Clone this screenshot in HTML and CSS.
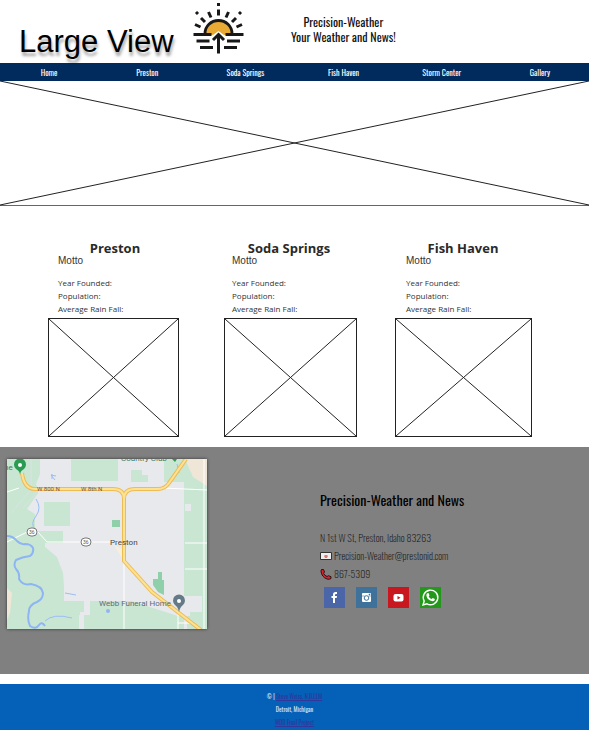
FILE: index.html
```html
<!DOCTYPE html>
<html lang="en">
<head>
<meta charset="utf-8">
<title>Precision-Weather</title>
<link rel="stylesheet" href="styles.css">
</head>
<body>
<header class="masthead">
  <div class="view-label">Large View</div>
  <svg class="logo" viewBox="0 0 52 52" aria-hidden="true">
    <path d="M12 32a13.500 14 0 0 1 27 0h-8l-5.500-4-5.500 4z" fill="#e9aa35"/>
    <path d="M12 31.500v-1a13.500 13 0 0 1 27 0v1" fill="none" stroke="#181818" stroke-width="2.800"/>
    <g fill="none" stroke="#181818" stroke-width="3">
      <path d="M0.500 31.500H18.500M32.500 31.500h18M3.500 38h13M34 38h13M7 44.500h13M31 44.500h13"/>
      <path d="M25.500 50.500V32M20 37l5.500-5.500 5.500 5.500"/>
      <path d="M25.500 0v3M25.500 6.500v6M15.500 9l2.500 5.500M35.500 9L33 14.500M8 15l4 4M43 15l-4 4M2 21.500l5.500 2.500M49 21.500L43.500 24M3 9l2 2M48 9l-2 2"/>
    </g>
  </svg>
  <h1 class="site-title">Precision-Weather<br>Your Weather and News!</h1>
</header>
<nav class="nav">
  <a href="#">Home</a><a href="#">Preston</a><a href="#">Soda Springs</a><a href="#">Fish Haven</a><a href="#">Storm Center</a><a href="#">Gallery</a>
</nav>
<main>
  <svg class="wire hero" viewBox="0 0 100 100" preserveAspectRatio="none" role="img" aria-label="Banner"><path d="M0 0L100 100M100 0L0 100"/></svg>
  <section class="towns">
    <div class="cards">
      <article class="card"><h2>Preston</h2><p class="motto">Motto</p><ul><li>Year Founded:</li><li>Population:</li><li>Average Rain Fall:</li></ul></article>
      <article class="card"><h2>Soda Springs</h2><p class="motto">Motto</p><ul><li>Year Founded:</li><li>Population:</li><li>Average Rain Fall:</li></ul></article>
      <article class="card"><h2>Fish Haven</h2><p class="motto">Motto</p><ul><li>Year Founded:</li><li>Population:</li><li>Average Rain Fall:</li></ul></article>
    </div>
    <div class="photos">
      <svg class="wire photo" viewBox="0 0 100 100" preserveAspectRatio="none" role="img" aria-label="Preston"><path d="M0 0L100 100M100 0L0 100"/></svg>
      <svg class="wire photo" viewBox="0 0 100 100" preserveAspectRatio="none" role="img" aria-label="Soda Springs"><path d="M0 0L100 100M100 0L0 100"/></svg>
      <svg class="wire photo" viewBox="0 0 100 100" preserveAspectRatio="none" role="img" aria-label="Fish Haven"><path d="M0 0L100 100M100 0L0 100"/></svg>
    </div>
  </section>
  <section class="contact">
    <svg class="map" viewBox="0 0 200 170" role="img" aria-label="Map of Preston">
      <rect width="200" height="170" fill="#c9e6d3"/>
      <path d="M33 0H157V23H177V137H195V153H180V170H72V142H57V127L56 114L50 98L38 88V84H56V72H28V55L20 50L31 34V30L29 25L33 15Z" fill="#e8e9ed"/>
      <path d="M64 0h47v22H64zM37 43h26v24H37zM124 11h11v5h6v7h-17z" fill="#c9e6d3"/>
      <path d="M178 45h6v7h-6z" fill="#e8e9ed"/>
      <path d="M57 142h20v11h-6v17H57z" fill="#c9e6d3"/>
      <path d="M83 142h94v28H77v-14h6zM57 142h16v14h-2v14H57z" fill="#c9e6d3"/>
      <path d="M118 140h59v-3h18v16h-12v4h-12z" fill="#e8e9ed"/>
      <path d="M178 0h22v27l-14-9z" fill="#efe6d8"/><path d="M0 129l5 5-2 20-3 7z" fill="#efe6d8"/>
      <path d="M105 61h8v7h-8zM151 113h4v8h2v15l-6-3-5-7v-6h5z" fill="#8fcfaa"/>
      <g fill="none" stroke="#fff" stroke-width="1"><path d="M0 83l20-10h11l9 10h77M117 102v68M0 33l12-4M156 29l44 2M178 84h22M178 110h22M197 0v170M171 152v18M171 164h12"/></g>
      <path d="M28 26L4 54M24 0v26M16 49l14-16" fill="none" stroke="#d9e3df" stroke-width="1"/>
      <path d="M0 77q6 0 10 5q4 4 8 3q6 0 8 4q1 5-3 8q-8 1-14 4q-3 5 0 9q4 4 3 10q4 7 12 5q11 2 12 9q0 6-6 9q-8 3-8 9q-2 9 1 15q6 4 9-1q3-4 6 1" fill="none" stroke="#8eb5f3" stroke-width="2"/>
      <path d="M29 40q6 9 0 17t-1 13M38 162q8-8 27-3M58 134l11 2M44 16l4 5M45 15v5M44 16l5 1M170 5l2 9" fill="none" stroke="#9bbdf5" stroke-width="1"/>
      <circle cx="101" cy="152" r="2" fill="#8eb5f3"/><path d="M107 86l9 5v9l-6-9z" fill="#f6f0d5"/>
      <g fill="none" stroke-linejoin="round"><path d="M15 14q2 16 13 16h78q11 0 11 10v62l28 31 49 38M117 40q0-10 11-10h23q7 0 11-6l17-24" stroke="#eebc55" stroke-width="4"/><path d="M15 14q2 16 13 16h78q11 0 11 10v62l28 31 49 38M117 40q0-10 11-10h23q7 0 11-6l17-24" stroke="#fde293" stroke-width="2"/></g>
      <g fill="#fff" stroke="#777" stroke-width="1"><rect x="20" y="69" width="10" height="8" rx="4"/><rect x="74" y="79" width="10" height="8" rx="4"/></g>
      <g class="map-small"><text x="22" y="75">36</text><text x="76" y="85">36</text></g>
      <g class="map-road"><text x="30" y="32">W 800 N</text><text x="74" y="32">W 8th N</text></g>
      <g class="map-place"><text class="map-town" x="103" y="86">Preston</text><text x="92" y="147">Webb Funeral Home</text><text class="map-green" x="114" y="2">Country Club</text><text class="map-green" x="-3" y="11">ne</text></g>
      <path d="M13 16q0-4-4-6a6 6 0 1 1 8 0q-4 2-4 6z" fill="#2a9b50"/><circle cx="13" cy="6" r="2" fill="#fff"/>
      <path d="M165 0h5l-2 3z" fill="#2a9b50"/>
      <path d="M172 153q-1-5-4-7a6 6 0 1 1 8 0q-3 2-4 7z" fill="#647b87"/><circle cx="172" cy="142" r="2" fill="#fff"/>
    </svg>
    <address class="details">
      <h2>Precision-Weather and News</h2>
      <p>N 1st W St, Preston, Idaho 83263</p>
      <p><svg class="glyph" viewBox="0 0 12 12" aria-hidden="true"><path d="M.5 2.500h11v7H.5z" fill="#eee" stroke="#333"/><path d="M5 5h2l1 1-1 2H5L4 6z" fill="#d77"/></svg><a href="mailto:Precision-Weather@prestonid.com">Precision-Weather@prestonid.com</a></p>
      <p><svg class="glyph" viewBox="0 0 12 12" aria-hidden="true"><path d="M1.500 1.500h2l1 2.500-1 1.200q1 2.500 3.500 3.300l1.500-.8 2.500 1v1.800q-1.500 1.200-4 .5Q1.500 9 1 3z" fill="#d9242e" stroke="#2b1113"/></svg>867-5309</p>
      <div class="social">
        <a class="fb" href="#" aria-label="Facebook"><svg viewBox="0 0 21 21"><path d="M9 16v-5H7.500V9H9V7.500Q9 5 11.500 5H13v2h-1q-1 0-1 1v1h2l-.3 2H11v5z" fill="#fff"/></svg></a>
        <a class="ig" href="#" aria-label="Instagram"><svg viewBox="0 0 21 21"><rect x="6" y="6" width="9" height="9" rx="1" fill="#fff"/><circle cx="10.500" cy="11" r="2.300" fill="none" stroke="#3f729b"/><path d="M6 9h2.500M12.500 9H15M13 7h1v1h-1z" stroke="#3f729b" fill="#3f729b" stroke-width=".6"/></svg></a>
        <a class="yt" href="#" aria-label="YouTube"><svg viewBox="0 0 21 21"><rect x="5.500" y="7" width="10" height="7.500" rx="2" fill="#fff"/><path d="M9.500 9v3.500l3-1.750z" fill="#c8171e"/></svg></a>
        <a class="wa" href="#" aria-label="WhatsApp"><svg viewBox="0 0 21 21"><path d="M3 18l1.200-4A7.300 7.300 0 1 1 7 16.800z" fill="none" stroke="#fff" stroke-width="1.400"/><path d="M7.300 6.200l1.200-.2 1 2.300-.8 1.100q1 2 3 2.700l1-1.200 2.200 1q0 2.100-2.300 2.300-5.500-1-6.300-6 .2-1.400 1-2z" fill="#fff"/></svg></a>
      </div>
    </address>
  </section>
</main>
<footer class="footer">
  <p>© | <a href="#">Steve Weiss, N.D.I.LM</a></p>
  <p>Detroit, Michigan</p>
  <p><a href="#">WDD Final Project</a></p>
</footer>
</body>
</html>
```
FILE: styles.css
```css
* { box-sizing: border-box; }
body, h1, h2, p, ul { margin: 0; padding: 0; }
body {
  background: #fff;
  color: #111;
  font-family: "Oswald", "Roboto Condensed", "Liberation Sans Narrow", "Liberation Sans", sans-serif;
}
a { color: inherit; text-decoration: none; }
svg { display: block; }

.masthead { display: flex; align-items: flex-start; padding: 3px 0 4px 19px; }
.view-label {
  width: 174px;
  padding-top: 22px;
  font: 31px/34px "Liberation Sans", Arial, sans-serif;
  color: #000;
  text-shadow: 1px 4px 3px rgba(0, 0, 0, .35);
}
.logo { width: 52px; height: 52px; }
.site-title {
  margin-left: 46px;
  padding-top: 11px;
  font-size: 12px;
  line-height: 15px;
  font-weight: 400;
  text-align: center;
}

.nav { display: grid; grid-template-columns: repeat(6, 1fr); background: #002b5c; }
.nav a { color: #fff; font-size: 8px; line-height: 18px; font-weight: 400; text-align: center; }

.wire { overflow: visible; fill: none; stroke: #222; }
.wire path { vector-effect: non-scaling-stroke; }
.hero { width: 100%; height: 125px; border-bottom: 1px solid #666; }

.towns { padding: 34px 57px 10px 48px; }
.cards { display: grid; grid-template-columns: repeat(3, 1fr); column-gap: 40px; margin-right: 2px; }
.card h2 {
  font: 700 13px/16px "Open Sans", sans-serif;
  color: #2a2a2a;
  text-align: center;
}
.card .motto { padding-left: 10px; font: 10px/10px "Liberation Sans", Arial, sans-serif; color: #333; }
.card ul {
  padding: 10px 0 3px 10px;
  list-style: none;
  font: 8px/13px "Open Sans", sans-serif;
  color: #333;
}
.photos { display: grid; grid-template-columns: 131fr 45fr 133fr 38fr 137fr; }
.photo { width: 100%; height: 119px; border: 1px solid #222; }
.photo:nth-child(2) { grid-column: 3; }
.photo:nth-child(3) { grid-column: 5; }

.contact {
  display: grid;
  grid-template-columns: 200px 1fr;
  column-gap: 113px;
  padding: 12px 7px 45px;
  background: #808080;
}
.map { width: 200px; height: 170px; box-shadow: 0 0 3px #333; }
.map text { font-family: Roboto, sans-serif; }
.map-small { font-size: 5px; fill: #555; }
.map-road { font-size: 6px; fill: #795548; }
.map-place { font-size: 8px; fill: #5f6a76; }
.map .map-town { fill: #444; }
.map .map-green { fill: #3c7d5b; }

.details { padding-top: 30px; font-style: normal; font-size: 10px; font-weight: 200; line-height: 18px; }
.details h2 { margin-bottom: 18px; font-size: 14px; line-height: 22px; font-weight: 400; color: #000; }
.details p { display: flex; align-items: center; gap: 2px; }
.glyph { width: 12px; height: 12px; }
.social { display: flex; gap: 11px; padding: 4px 0 0 4px; }
.social a { width: 21px; height: 21px; }
.fb { background: #4a66a9; }
.ig { background: #3f729b; }
.yt { background: #c8171e; }
.wa { background: #24981b; }

.footer {
  margin-top: 10px;
  padding: 6px 0 1px;
  background: #0560b8;
  color: #dce9f6;
  font-size: 6px;
  line-height: 13px;
  text-align: center;
}
.footer a { color: #31379b; text-decoration: underline; }
```
